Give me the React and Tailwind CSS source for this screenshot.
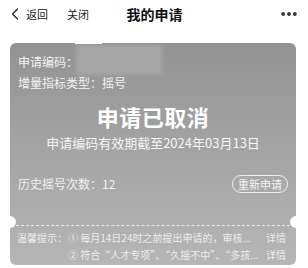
import { MoreHorizontal, ChevronLeft } from 'lucide-react';

const font = { fontFamily: '"Noto Sans CJK SC", "Noto Sans", sans-serif' };

export default function App() {
    return (
        <div className="w-[308px] h-[268px] bg-white overflow-hidden" style={font}>
            {/* Nav bar */}
            <div className="relative h-[30px] flex items-center text-[#222]">
                <div className="flex items-center pl-[5px] -mt-[2px]">
                    <ChevronLeft size={20} strokeWidth={1.5} className="text-[#222]" />
                    <span className="text-[11px] ml-[1px]">返回</span>
                    <span className="text-[11px] ml-[19px]">关闭</span>
                </div>
                <div className="absolute left-0 right-0 top-0 h-[28px] flex items-center justify-center pointer-events-none">
                    <span className="text-[14px] font-bold text-[#111] pl-[1px]">我的申请</span>
                </div>
                <div className="ml-auto pr-[9px] flex items-center -mt-[2px]">
                    <MoreHorizontal size={20} strokeWidth={2.6} className="text-[#333]" />
                </div>
            </div>

            {/* Card */}
            <div className="relative mx-[10px] mt-[13px] w-[286px] h-[222px] rounded-[6px] bg-gradient-to-b from-[#939393] to-[#b6b6b6] text-white overflow-hidden">
                {/* redacted code */}
                <div className="absolute left-[66px] top-[2px] w-[86px] h-[30px] bg-[#a6a6a6] blur-[2px]" />
                <div className="absolute left-[65px] top-[0px] w-[27px] h-[1px] bg-white" />

                <div className="relative px-[8px] pt-[11px]">
                    <div className="text-[12px] leading-[16px] text-[#f2f2f2]">申请编码：</div>
                    <div className="mt-[5px] text-[12px] leading-[16px] text-[#f2f2f2]">增量指标类型：摇号</div>
                    <div className="mt-[11px] text-center text-[22px] leading-[28px] font-bold tracking-[0.5px]">申请已取消</div>
                    <div className="mt-[4px] text-center text-[13px] leading-[18px] text-[#f5f5f5]">申请编码有效期截至2024年03月13日</div>
                    <div className="mt-[23px] flex items-center justify-between h-[18px]">
                        <span className="text-[12px] text-[#f0f0f0]">历史摇号次数：12</span>
                        <span className="h-[18px] px-[5px] flex items-center rounded-full border border-[#f0f0f0] text-[11px] text-[#f5f5f5]">重新申请</span>
                    </div>
                </div>

                {/* dashed divider */}
                <div className="mt-[32px] mx-[6px] border-t border-dashed border-[#eaeaea]" />
                <div className="absolute left-[-6px] top-[173px] w-[12px] h-[12px] rounded-full bg-white" />
                <div className="absolute right-[-6px] top-[173px] w-[12px] h-[12px] rounded-full bg-white" />

                <div className="px-[7px] pt-[3px] text-[10px] leading-[17px] text-[#ececec]">
                    <div className="flex">
                        <span className="w-[51px] shrink-0">温馨提示：</span>
                        <span className="flex-1 whitespace-nowrap">① 每月14日24时之前提出申请的，审核...</span>
                        <span className="pr-[3px]">详情</span>
                    </div>
                    <div className="flex">
                        <span className="w-[51px] shrink-0" />
                        <span className="flex-1 whitespace-nowrap">② 符合“人才专项”、“久摇不中”、“多孩...</span>
                        <span className="pr-[3px]">详情</span>
                    </div>
                </div>
            </div>
        </div>
    );
}
